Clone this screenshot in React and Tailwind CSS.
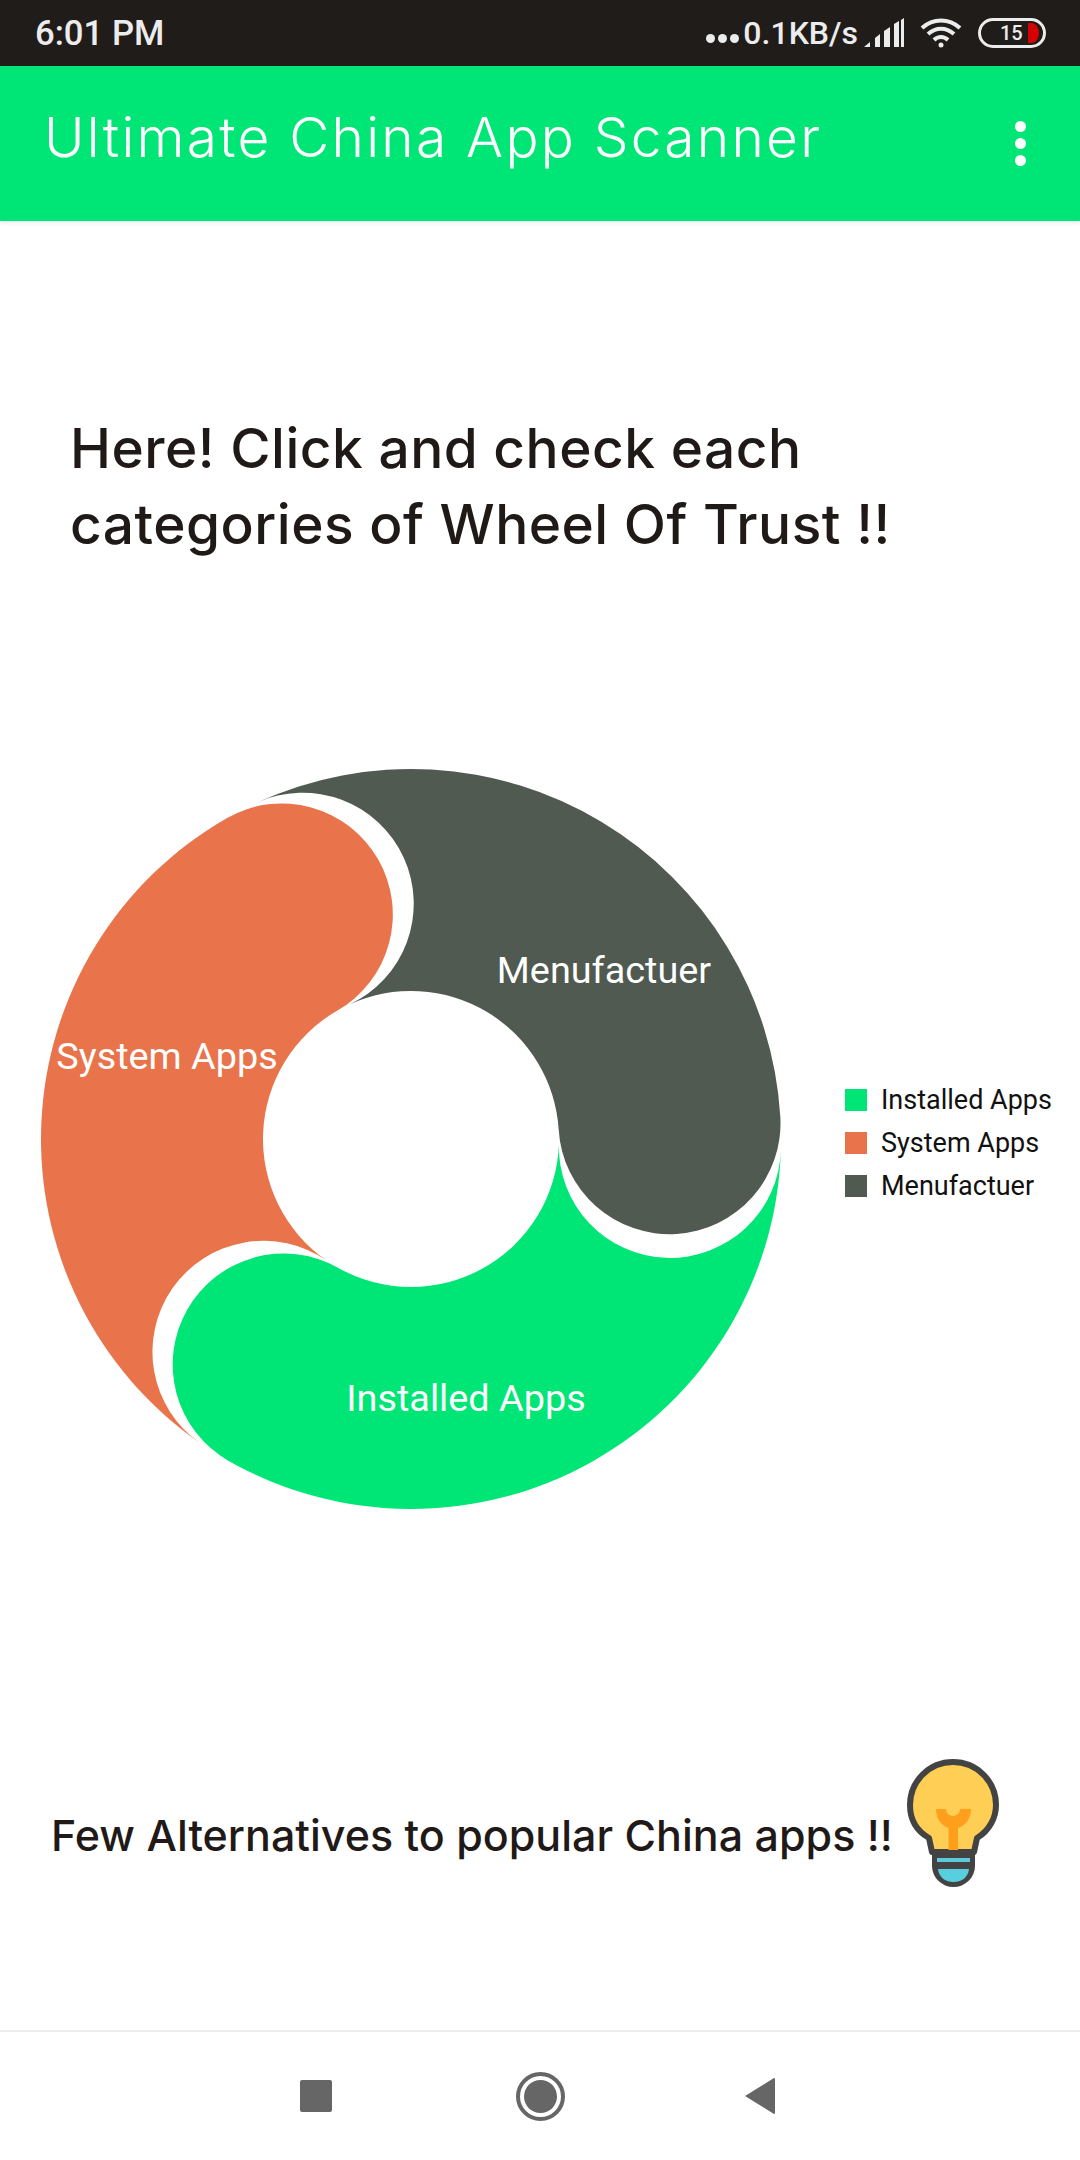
import React from 'react';

const CX = 411;
const CY = 1140 - 740;
const OUTER = 370;
const INNER = 148;
const CAP = 111;

// a point on a ring at an angle in degrees, clockwise from 3 o'clock
const pt = (r, deg) => {
  const a = (deg * Math.PI) / 180;
  return `${(CX + r * Math.cos(a)).toFixed(2)} ${(CY + r * Math.sin(a)).toFixed(2)}`;
};

// ring slice with a round head and a hollow tail
const slice = (from, to) => {
  const large = to - from > 180 ? 1 : 0;
  return [
    `M${pt(OUTER, from)}`,
    `A${OUTER} ${OUTER} 0 ${large} 1 ${pt(OUTER, to)}`,
    `A${CAP} ${CAP} 0 0 1 ${pt(INNER, to)}`,
    `A${INNER} ${INNER} 0 ${large} 0 ${pt(INNER, from)}`,
    `A${CAP} ${CAP} 0 0 0 ${pt(OUTER, from)}`,
    'Z',
  ].join(' ');
};

const segments = [
  { name: 'Installed Apps', color: '#00e676', from: 1.8, to: 119.6, x: 466, y: 659 },
  { name: 'System Apps', color: '#e9744b', from: 124.8, to: 240.2, x: 167, y: 317 },
  { name: 'Menufactuer', color: '#505a50', from: 245.4, to: 356.5, x: 604, y: 231 },
];

function Donut() {
  return (
    <svg width="800" height="800" viewBox="0 0 800 800" className="shrink-0">
      {segments.map((s) => (
        <path key={s.name} d={slice(s.from, s.to)} fill={s.color} />
      ))}
      {segments.map((s) => (
        <text
          key={s.name}
          x={s.x}
          y={s.y}
          textAnchor="middle"
          dominantBaseline="central"
          fill="#ffffff"
          className="font-['Roboto',sans-serif] text-[37.800px]"
        >
          {s.name}
        </text>
      ))}
    </svg>
  );
}

function StatusBar() {
  return (
    <div className="h-[66px] shrink-0 bg-[#201c1a] flex items-center justify-between pl-[35px] pr-[34px] text-[#ececec] font-['Roboto',sans-serif] font-medium">
      <span className="text-[34.700px] leading-none">6:01 PM</span>
      <div className="flex items-center">
        <div className="flex gap-[3px] mt-[10px] mr-[4px]">
          <span className="w-[9px] h-[9px] rounded-full bg-[#ececec]" />
          <span className="w-[9px] h-[9px] rounded-full bg-[#ececec]" />
          <span className="w-[9px] h-[9px] rounded-full bg-[#ececec]" />
        </div>
        <span className="text-[32px] leading-none">0.1KB/s</span>
        <svg width="41" height="30" viewBox="0 0 41 30" className="ml-[6px]" fill="#ececec">
          <path d="M0 29 L6 24 V29 Z" />
          <path d="M11 29 V20 L16 16 V29 Z" />
          <path d="M20 29 V13 L26 9 V29 Z" />
          <path d="M30 29 V6 L35 3 V29 Z" />
          <path d="M37 29 V2 L40 0 V29 Z" />
        </svg>
        <svg width="42" height="32" viewBox="0 0 42 32" className="ml-[15px]" fill="none" stroke="#ececec" strokeWidth="4">
          <path d="M2 11 C13 1 29 1 40 11" />
          <path d="M8 17 C16 10 26 10 34 17" />
          <path d="M14 23 C18 19 24 19 28 23" />
          <circle cx="21" cy="28" r="2.500" fill="#ececec" stroke="none" />
        </svg>
        <div className="ml-[16px] w-[68px] h-[30px] rounded-full border-[3px] border-[#ececec] flex items-center relative">
          <span className="ml-[19px] text-[20px] leading-none">15</span>
          <svg width="11" height="20" viewBox="0 0 11 20" className="absolute right-[4px] top-[2px]">
            <path d="M0 0 H3 C8 0 11 5 11 10 C11 15 8 20 3 20 H0 Z" fill="#d50000" />
          </svg>
        </div>
      </div>
    </div>
  );
}

function Bulb() {
  return (
    <svg width="150" height="160" viewBox="0 0 150 160" className="shrink-0">
      <path
        d="M52 112 L49 98 C35 90 30 77 30 65 A43 43 0 0 1 116 65 C116 77 110 90 97 98 L94 112 Z"
        fill="#ffce54"
        stroke="#434343"
        strokeWidth="6"
        strokeLinejoin="round"
      />
      <path d="M56 69 H66 A7 7 0 0 0 80 69 H91 C91 79 85 86 78 88 V110 H68.500 V88 C62 86 56 79 56 69 Z" fill="#ff9f1c" />
      <path d="M52 110 H95 V126 A21.500 21 0 0 1 52 126 Z" fill="#434343" />
      <rect x="57" y="118" width="33" height="4" fill="#5fc9dc" />
      <path d="M58 129 H89 C88 138 81 142 73.500 142 C66 142 59 138 58 129 Z" fill="#58cfdf" />
    </svg>
  );
}

export default function App() {
  return (
    <div className="w-[1080px] h-[2160px] bg-white flex flex-col overflow-hidden">
      <StatusBar />

      <div className="h-[155px] shrink-0 bg-[#00e676] flex items-center justify-between pl-[44px] pr-[54px] shadow-[0_2px_4px_rgba(0,0,0,0.08)] relative">
        <h1 className="mb-[12px] text-white font-['Inter',sans-serif] font-light text-[55px] leading-none tracking-[2.250px] whitespace-nowrap">
          Ultimate China App Scanner
        </h1>
        <div className="flex flex-col gap-[6px]">
          <span className="w-[11px] h-[11px] rounded-full bg-white" />
          <span className="w-[11px] h-[11px] rounded-full bg-white" />
          <span className="w-[11px] h-[11px] rounded-full bg-white" />
        </div>
      </div>

      <div className="flex-1 flex flex-col">
        <h2 className="mt-[189px] ml-[70px] h-[152px] text-[#1f1a17] font-['Inter',sans-serif] font-medium text-[55px] leading-[76px] tracking-[0.5px] whitespace-nowrap">
          Here! Click and check each
          <br />
          categories of Wheel Of Trust !!
        </h2>

        <div className="mt-[177px] flex items-center">
          <Donut />
          <div className="ml-[45px] mt-[7px] flex flex-col gap-[21px] font-['Roboto',sans-serif] text-[27px] leading-[22px] text-[#111111]">
            {segments.map((s) => (
              <div key={s.name} className="flex items-center gap-[14px] whitespace-nowrap">
                <span className="w-[22px] h-[22px] shrink-0" style={{ backgroundColor: s.color }} />
                {s.name}
              </div>
            ))}
          </div>
        </div>

        <div className="mt-[201px] ml-[51px] flex items-center">
          <span className="w-[829px] mt-[30px] text-[#1f1a17] font-['Inter',sans-serif] font-medium text-[43px] leading-none whitespace-nowrap">
            Few Alternatives to popular China apps !!
          </span>
          <Bulb />
        </div>
      </div>

      <div className="h-[130px] shrink-0 border-t-2 border-[#ececec] flex items-center">
        <div className="w-[32px] h-[32px] ml-[300px] rounded-[2px] bg-[#666666]" />
        <div className="w-[49px] h-[49px] ml-[184px] rounded-full border-[4px] border-[#666666] flex items-center justify-center">
          <div className="w-[33px] h-[33px] rounded-full bg-[#666666]" />
        </div>
        <svg width="32" height="38" viewBox="0 0 32 38" className="ml-[179px]">
          <path d="M1 19 L30 1 Q31 1 31 2 V36 Q31 37 30 37 Z" fill="#666666" />
        </svg>
      </div>
    </div>
  );
}
